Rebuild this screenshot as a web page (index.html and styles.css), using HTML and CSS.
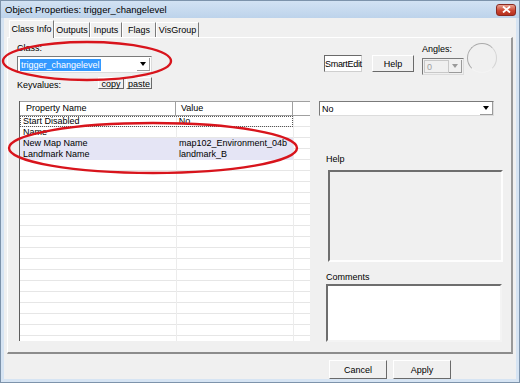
FILE: index.html
```html
<!DOCTYPE html>
<html lang="en">
<head>
  <meta charset="UTF-8">
  <title>Object Properties</title>
  <link rel="stylesheet" href="styles.css">
</head>
<body>
  <div class="window">
    <div class="titlebar">
      <span class="title">Object Properties: trigger_changelevel</span>
      <span class="close">
        <svg width="9" height="7" viewBox="0 0 9 7"><path d="M1 0.5 L8 6.5 M8 0.5 L1 6.5" stroke="#fff" stroke-width="1.8"/></svg>
      </span>
    </div>
    <div class="client">
      <div class="tabs">
        <span class="tab tab-on" style="width:45px">Class Info</span>
        <span class="tab" style="width:36px">Outputs</span>
        <span class="tab" style="width:32px">Inputs</span>
        <span class="tab" style="width:34px">Flags</span>
        <span class="tab" style="width:43px">VisGroup</span>
      </div>
      <div class="panel">
        <div class="left">
          <div class="lbl">Class:</div>
          <div class="combo class-combo">
            <span class="sel">trigger_changelevel</span>
            <span class="drop"><i class="arrow"></i></span>
          </div>
          <div class="kv-row">
            <span class="kv-lbl">Keyvalues:</span>
            <span class="kv-btns">
              <button class="btn small">copy</button>
              <button class="btn small">paste</button>
            </span>
          </div>
          <div class="grid">
            <div class="grid-head">
              <span class="h-name">Property Name</span>
              <span class="h-value">Value</span>
              <span class="h-extra"></span>
            </div>
            <div class="grid-body">
              <div class="row focus"><span class="c-name">Start Disabled</span><span class="c-value">No</span></div>
              <div class="row"><span class="c-name">Name</span><span class="c-value"></span></div>
              <div class="row hl"><span class="c-name">New Map Name</span><span class="c-value">map102_Environment_04b</span></div>
              <div class="row hl"><span class="c-name">Landmark Name</span><span class="c-value">landmark_B</span></div>
            </div>
          </div>
        </div>
        <div class="right">
          <div class="tools">
            <button class="smartedit">SmartEdit</button>
            <button class="btn help-btn">Help</button>
            <div class="angles">
              <span class="angles-lbl">Angles:</span>
              <div class="combo angle-combo">
                <span class="angle-val">0</span>
                <span class="drop"><i class="arrow grey"></i></span>
              </div>
            </div>
            <div class="dial"></div>
          </div>
          <div class="combo value-combo">
            <span class="val">No</span>
            <span class="drop"><i class="arrow"></i></span>
          </div>
          <div class="side-lbl help-lbl">Help</div>
          <div class="help-box"></div>
          <div class="side-lbl comments-lbl">Comments</div>
          <div class="comments-box"></div>
        </div>
      </div>
      <div class="footer">
        <button class="btn big">Cancel</button>
        <button class="btn big">Apply</button>
      </div>
    </div>
    <svg class="marks" width="520" height="383" viewBox="0 0 520 383">
      <ellipse cx="87" cy="61" rx="84" ry="19" fill="none" stroke="#d8141c" stroke-width="2.4"/>
      <ellipse cx="153" cy="148" rx="144" ry="25" fill="none" stroke="#d8141c" stroke-width="2.4"/>
    </svg>
  </div>
</body>
</html>
```

FILE: styles.css
```css
* {
  box-sizing: border-box;
}
body {
  margin: 0;
  background: #fff;
  font-family: "Liberation Sans", Arial, sans-serif;
  font-size: 9px;
  color: #000;
}
.window {
  position: relative;
  width: 520px;
  height: 383px;
  border: 1px solid #7d93ab;
  background: #f0f0f0;
  display: flex;
  flex-direction: column;
  overflow: hidden;
}
.titlebar {
  height: 17px;
  flex: none;
  display: flex;
  align-items: center;
  justify-content: space-between;
  padding: 0 3px 0 4px;
  background: linear-gradient(#d2e2f3, #bdd3eb);
}
.title {
  font-size: 9.5px;
}
.close {
  width: 20px;
  height: 12px;
  border: 1px solid #8a2a22;
  border-radius: 3px;
  background: linear-gradient(#eaa494, #cc4733 55%, #b5301e);
  display: flex;
  align-items: center;
  justify-content: center;
}
.client {
  flex: 1;
  display: flex;
  flex-direction: column;
  border: solid #d6e4f3;
  border-width: 0 3px 3px 3px;
  padding: 0 3px;
}

/* tabs */
.tabs {
  height: 19px;
  display: flex;
  align-items: flex-end;
  padding-left: 2px;
}
.tab {
  height: 15px;
  line-height: 14px;
  text-align: center;
  border-top: 1px solid #fff;
  border-left: 1px solid #fff;
  border-right: 1px solid #7a7a7a;
  white-space: nowrap;
}
.tab-on {
  height: 18px;
  line-height: 16px;
  margin-bottom: -1px;
  background: #f0f0f0;
  position: relative;
}

.panel {
  height: 317px;
  flex: none;
  display: flex;
  border-top: 1px solid #fff;
  border-left: 1px solid #fff;
  border-right: 2px solid #999;
  border-bottom: 2px solid #8c8c8c;
  padding-left: 9px;
}
.left {
  width: 293px;
  padding-top: 5px;
  display: flex;
  flex-direction: column;
}
.lbl {
  height: 11px;
  line-height: 11px;
}

/* combos */
.combo {
  display: flex;
  align-items: center;
  justify-content: space-between;
  background: #fff;
  border: 1px solid;
  border-color: #7a7a7a #dcdcdc #dcdcdc #7a7a7a;
}
.drop {
  width: 13px;
  height: 100%;
  display: flex;
  align-items: center;
  justify-content: center;
  border-right: 1px solid #9a9a9a;
  border-bottom: 1px solid #9a9a9a;
}
.arrow {
  width: 0;
  height: 0;
  border-left: 3px solid transparent;
  border-right: 3px solid transparent;
  border-top: 4px solid #000;
}
.arrow.grey {
  border-top-color: #9a9a9a;
}
.class-combo {
  margin-top: 2px;
  width: 135px;
  height: 17px;
  padding: 1px;
}
.sel {
  background: #3399ff;
  color: #fff;
  height: 12px;
  line-height: 12px;
  padding: 0 1px;
  margin-left: 1px;
}

.kv-row {
  margin-top: 4px;
  width: 135px;
  height: 13px;
  display: flex;
  justify-content: space-between;
  align-items: flex-end;
}
.kv-lbl {
  line-height: 11px;
  margin-bottom: -1px;
}
.kv-btns {
  display: flex;
  gap: 2px;
  align-self: flex-start;
}

/* buttons */
.btn {
  font: inherit;
  color: #000;
  padding: 0;
  background: #f0f0f0;
  border: 1px solid;
  border-color: #fff #6a6a6a #6a6a6a #fff;
}
.btn.small {
  width: 26px;
  height: 12px;
  line-height: 10px;
  padding-top: 1px;
}
.btn.big {
  width: 58px;
  height: 19px;
}

/* keyvalue grid */
.grid {
  margin-top: 11px;
  margin-left: 2px;
  width: 291px;
  height: 240px;
  border-left: 1px solid #5e5e5e;
  background: #fff;
  display: flex;
  flex-direction: column;
}
.grid-head {
  display: flex;
  height: 15px;
  border-top: 1px solid #a0a0a0;
  border-bottom: 1px solid #a0a0a0;
  line-height: 13px;
}
.h-name {
  width: 156px;
  padding-left: 6px;
  border-right: 1px solid #a0a0a0;
}
.h-value {
  width: 117px;
  padding-left: 5px;
  border-right: 1px solid #a0a0a0;
}
.h-extra {
  flex: 1;
}
.grid-body {
  flex: 1;
  background-image:
    linear-gradient(#ececec, #ececec),
    linear-gradient(#ececec, #ececec),
    repeating-linear-gradient(to bottom, transparent 0, transparent 10px, #e6e6e6 10px, #e6e6e6 11px);
  background-size: 1px 100%, 1px 100%, 100% 100%;
  background-position: 156px 0, 273px 0, 0 0;
  background-repeat: no-repeat;
}
.row {
  display: flex;
  width: 273px;
  height: 11px;
  line-height: 11px;
}
.c-name {
  width: 156px;
  padding-left: 3px;
}
.c-value {
  width: 117px;
  padding-left: 3px;
  white-space: nowrap;
}
.row.focus {
  border: 1px dotted #555;
  line-height: 9px;
}
.row.focus .c-name {
  padding-left: 2px;
}
.row.hl {
  background: #e5e5f5;
}

/* right side */
.right {
  margin-left: 9px;
  padding-top: 4px;
  flex: 1;
  display: flex;
  flex-direction: column;
}
.tools {
  height: 33px;
  display: flex;
  align-items: flex-start;
}
.smartedit {
  font: inherit;
  padding: 0;
  margin: 13px 0 0 5px;
  width: 38px;
  height: 17px;
  background: #fff;
  border: 1px solid;
  border-color: #6a6a6a #cfcfcf #cfcfcf #6a6a6a;
  letter-spacing: -0.3px;
}
.help-btn {
  margin: 13px 0 0 10px;
  width: 42px;
  height: 17px;
}
.angles {
  margin-left: 8px;
  display: flex;
  flex-direction: column;
}
.angles-lbl {
  height: 12px;
  line-height: 12px;
  margin-top: 1px;
}
.angle-combo {
  margin-top: 3px;
  width: 42px;
  height: 17px;
  background: #f0f0f0;
  padding: 1px;
}
.angle-val {
  color: #a0a0a0;
  flex: 1;
  height: 100%;
  padding-left: 2px;
  line-height: 12px;
  border: 1px solid #c8c8c8;
}
.dial {
  margin: 1px 0 0 3px;
  width: 30px;
  height: 30px;
  border-radius: 50%;
  border: 1.5px solid;
  border-color: #aaa #d4d4d4 #f4f4f4 #aaa;
}
.value-combo {
  margin-top: 26px;
  width: 175px;
  height: 15px;
}
.val {
  padding-left: 2px;
}
.side-lbl {
  height: 11px;
  line-height: 11px;
  padding-left: 7px;
}
.help-lbl {
  margin-top: 38px;
}
.help-box {
  margin: 5px 0 0 9px;
  width: 175px;
  height: 92px;
  border: 2px solid;
  border-color: #6e6e6e #fdfdfd #fdfdfd #6e6e6e;
}
.comments-lbl {
  margin-top: 10px;
}
.comments-box {
  margin: 1px 0 0 7px;
  width: 176px;
  height: 58px;
  background: #fff;
  border: 2px solid;
  border-color: #6e6e6e #f4f4f4 #f4f4f4 #6e6e6e;
}

.footer {
  flex: 1;
  display: flex;
  justify-content: flex-end;
  gap: 6px;
  padding: 6px 62px 0 0;
}

/* red annotation rings */
.marks {
  position: absolute;
  top: -1px;
  left: -1px;
  pointer-events: none;
}
```
